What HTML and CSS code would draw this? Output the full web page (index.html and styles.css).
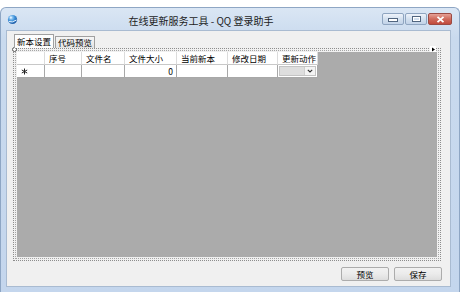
FILE: index.html
```html
<!DOCTYPE html>
<html lang="zh-CN">
<head>
<meta charset="UTF-8">
<title>在线更新服务工具 - QQ 登录助手</title>
<link rel="stylesheet" href="styles.css">
</head>
<body>

<div class="window">
    <div class="titlebar">
        <svg class="app-icon" width="11" height="11" viewBox="0 0 11 11">
            <defs>
                <radialGradient id="globe" cx="0.35" cy="0.3" r="0.8">
                    <stop offset="0" stop-color="#bfe4ff"/>
                    <stop offset="0.5" stop-color="#3b8fd8"/>
                    <stop offset="1" stop-color="#1b4f9a"/>
                </radialGradient>
            </defs>
            <circle cx="5.5" cy="5.5" r="4.6" fill="url(#globe)"/>
            <path d="M2 7.5 Q5 9 9.5 6" stroke="#e8f4ff" stroke-width="1" fill="none"/>
            <circle cx="3.8" cy="3.6" r="1.1" fill="#eaf6ff" opacity="0.8"/>
        </svg>
        <div class="title">在线更新服务工具 - QQ 登录助手</div>
        <div class="controls">
            <div class="ctl"><span class="glyph-min"></span></div>
            <div class="ctl"><span class="glyph-max"></span></div>
            <div class="ctl close">
                <svg width="9" height="7" viewBox="0 0 9 7">
                    <path d="M1.5 0.8 L7.5 6.2 M7.5 0.8 L1.5 6.2" stroke="#fff" stroke-width="1.8"/>
                </svg>
            </div>
        </div>
    </div>

    <div class="client">
        <div class="tabs">
            <div class="tab active">新本设置</div>
            <div class="tab">代码预览</div>
        </div>

        <div class="tab-page">
            <span class="handle-left"></span>
            <span class="handle-right">
                <svg width="5" height="5" viewBox="0 0 5 5"><path d="M1 0.5 L4 2.5 L1 4.5 Z" fill="#000"/></svg>
            </span>
            <div class="tab-inner">
                <div class="grid">
                    <div class="row header">
                        <div class="cell rowhead"></div>
                        <div class="cell">序号</div>
                        <div class="cell">文件名</div>
                        <div class="cell">文件大小</div>
                        <div class="cell">当前新本</div>
                        <div class="cell">修改日期</div>
                        <div class="cell">更新动作</div>
                    </div>
                    <div class="row data">
                        <div class="cell rowhead">
                            <svg width="7" height="7" viewBox="0 0 7 7">
                                <path d="M3.5 0.5 V6.5 M0.8 2 L6.2 5 M0.8 5 L6.2 2" stroke="#222" stroke-width="1"/>
                            </svg>
                        </div>
                        <div class="cell"></div>
                        <div class="cell"></div>
                        <div class="cell num">0</div>
                        <div class="cell"></div>
                        <div class="cell"></div>
                        <div class="cell combo-cell">
                            <div class="combo">
                                <div class="combo-field"></div>
                                <div class="combo-btn">
                                    <svg width="6" height="4" viewBox="0 0 6 4"><path d="M0.8 0.8 L3 3 L5.2 0.8" stroke="#333" stroke-width="1.1" fill="none"/></svg>
                                </div>
                            </div>
                        </div>
                    </div>
                </div>
            </div>
        </div>

        <div class="actions">
            <button type="button">预览</button>
            <button type="button">保存</button>
        </div>
    </div>
</div>

</body>
</html>
```

FILE: styles.css
```css
body {
    margin: 0;
    background-color: #fff;
    font-family: "Noto Sans CJK SC", "Liberation Sans", sans-serif;
    width: 461px;
    height: 292px;
    overflow: hidden;
}
.window {
    margin-top: 7px;
    width: 460px;
    height: 285px;
    box-sizing: border-box;
    border: 1px solid #8ea6c4;
    border-bottom: none;
    border-radius: 6px 6px 0 0;
    background: linear-gradient(#dae6f4, #c9daee 30px, #c4d6ed);
    display: flex;
    flex-direction: column;
}
.titlebar {
    height: 22px;
    display: flex;
    align-items: center;
    padding-left: 6px;
}
.app-icon {
    margin-top: 1px;
}
.title {
    flex: 1;
    text-align: center;
    font-size: 10px;
    color: #1c1c1c;
    padding-left: 2px;
    margin-top: 2px;
}
.controls {
    display: flex;
    gap: 1px;
    margin-right: 7px;
    align-self: flex-start;
    margin-top: 5px;
}
.ctl {
    width: 22px;
    height: 12px;
    box-sizing: border-box;
    border: 1px solid #8fa5c0;
    border-radius: 2px;
    background: linear-gradient(#eef3fa, #d3e0ef 50%, #c2d3e8);
    display: flex;
    align-items: center;
    justify-content: center;
}
.ctl.close {
    width: 24px;
    border-color: #9b4a43;
    background: linear-gradient(#e6a196, #cf6a5c 50%, #c14a3c);
}
.glyph-min {
    width: 8px;
    height: 2px;
    background: #fff;
    border: 1px solid #51657f;
    margin-top: 1px;
}
.glyph-max {
    width: 7px;
    height: 4px;
    border: 1px solid #51657f;
    box-shadow: inset 0 0 0 1px #fff;
}
.client {
    flex: 1;
    margin: 0 8px 5px 5px;
    background-color: #f0f0f0;
    border: 1px solid #a9bbd1;
    display: flex;
    flex-direction: column;
}
.tabs {
    display: flex;
    align-items: flex-end;
    height: 14px;
    margin-top: 3px;
    padding-left: 8px;
}
.tab {
    font-size: 8.5px;
    line-height: 11px;
    height: 12px;
    box-sizing: border-box;
    padding: 0 2px;
    border: 1px solid #a0a0a0;
    border-bottom: none;
    background: linear-gradient(#f6f6f6, #e3e3e3);
    color: #000;
    margin-left: -1px;
}
.tab.active {
    height: 14px;
    line-height: 13px;
    background: #fdfdfd;
    position: relative;
    z-index: 1;
    margin-right: 2px;
}
.tab-page {
    position: relative;
    height: 213px;
    margin: 0 9px 0 6px;
    border: 1px dotted #8c8c8c;
    padding: 1px;
    box-sizing: border-box;
}
.tab-inner {
    height: 100%;
    box-sizing: border-box;
    border: 1px dotted #a5a5a5;
    padding: 1px;
}
.handle-left {
    position: absolute;
    left: -2px;
    top: -2px;
    width: 3px;
    height: 3px;
    border: 1px solid #555;
    border-radius: 50%;
    background: #fff;
}
.handle-right {
    position: absolute;
    right: 4px;
    top: -3px;
    width: 6px;
    height: 6px;
    background: #fff;
    display: flex;
    align-items: center;
    justify-content: center;
}
.grid {
    height: 100%;
    background-color: #ababab;
}
.row {
    display: grid;
    grid-template-columns: 28px 37px 43px 52px 51px 50px 40px;
    width: 301px;
    height: 13px;
}
.cell {
    box-sizing: border-box;
    border-right: 1px solid #c9c9c9;
    border-bottom: 1px solid #a8a8a8;
    background: #fff;
    font-size: 8.5px;
    line-height: 12px;
    padding-left: 4px;
    color: #000;
    overflow: hidden;
    white-space: nowrap;
}
.header .cell {
    border-right-color: #dcdcdc;
    border-bottom-color: #c8c8c8;
}
.data .cell {
    border-right-color: #a8a8a8;
}
.rowhead {
    padding-left: 4px;
    display: flex;
    align-items: center;
}
.num {
    text-align: right;
    padding-right: 3px;
}
.combo-cell {
    padding: 1px;
}
.combo {
    display: flex;
    height: 100%;
    border: 1px solid #c4c4c4;
    box-sizing: border-box;
}
.combo-field {
    flex: 1;
    background: #dedede;
}
.combo-btn {
    width: 10px;
    background: #f4f4f4;
    border-left: 1px solid #cfcfcf;
    display: flex;
    align-items: center;
    justify-content: center;
}
.actions {
    display: flex;
    justify-content: flex-end;
    gap: 5px;
    margin-top: 6px;
    padding-right: 8px;
}
button {
    width: 48px;
    height: 14px;
    padding: 0;
    font-family: inherit;
    font-size: 8.5px;
    line-height: 12px;
    color: #000;
    border: 1px solid #acacac;
    border-radius: 2px;
    background: linear-gradient(#f2f2f2, #ebebeb 50%, #dddddd);
}
```
